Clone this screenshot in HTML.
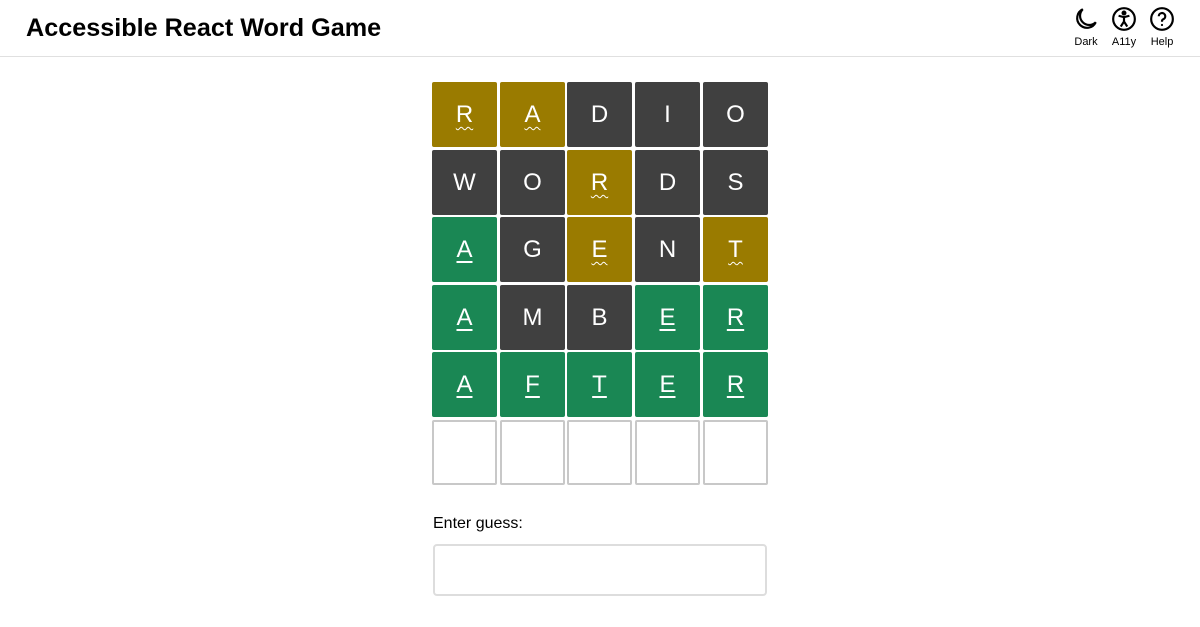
<!DOCTYPE html>
<html><head><style>
body{margin:0;width:1200px;height:627px;background:#fff;font-family:"Liberation Sans",sans-serif;position:relative;overflow:hidden}
h1{position:absolute;left:26px;top:14px;margin:0;font-size:25.2px;font-weight:bold;color:#000}
.hdr{position:absolute;left:0;top:56px;width:1200px;height:1px;background:#e0e0e0}
.ic{position:absolute;top:6px;width:40px;text-align:center;font-size:11px;color:#000}
.ic svg{display:block;margin:0 auto 4px}
.c{position:absolute;width:65px;height:65px;color:#fff;font-size:24px;text-align:center;line-height:66px;box-sizing:border-box;border-radius:2px}
.y{background:#9a7b00}.d{background:#404040}.g{background:#1a8754}
.e{border:2px solid #c8c8c8;background:#fff}
.u{text-decoration:underline;text-underline-offset:4px;text-decoration-thickness:1.5px}
.w{text-decoration:underline wavy;text-underline-offset:4px;text-decoration-thickness:1px}
label{position:absolute;left:433px;top:515px;font-size:16px;color:#000}
.inp{position:absolute;left:433px;top:544px;width:334px;height:52px;border:2px solid #ddd;border-radius:4px;box-sizing:border-box}
</style></head><body>
<h1>Accessible React Word Game</h1>
<div class="ic" style="left:1066px"><svg width="26" height="26" viewBox="0 0 24 24" fill="none" stroke="#000" stroke-width="2"><path d="M9 3a9 9 0 1 0 12 12A8 8 0 0 1 9 3z"/></svg>Dark</div>
<div class="ic" style="left:1104px"><svg width="26" height="26" viewBox="0 0 24 24" fill="none" stroke="#000" stroke-width="2"><circle cx="12" cy="12" r="10"/><circle cx="12" cy="6.5" r="1.3" fill="#000"/><path d="M7 9l5 1.3 5-1.3M12 10.3v4M9 19l3-4.7 3 4.7"/></svg>A11y</div>
<div class="ic" style="left:1142px"><svg width="26" height="26" viewBox="0 0 24 24" fill="none" stroke="#000" stroke-width="2"><circle cx="12" cy="12" r="10"/><path d="M9 9.5a3 3 0 1 1 4 2.8c-.7.3-1 1-1 1.7v.5"/><circle cx="12" cy="17.5" r="1" fill="#000" stroke="none"/></svg>Help</div>
<div class="hdr"></div>
<div id="g"></div>
<label>Enter guess:</label>
<div class="inp"></div>
<script>
var rows=[["yR","yA","dD","dI","dO"],["dW","dO","yR","dD","dS"],["gA","dG","yE","dN","yT"],["gA","dM","dB","gE","gR"],["gA","gF","gT","gE","gR"],["e","e","e","e","e"]];
var xs=[432,500,567,635,703],ys=[82,150,217,285,352,420],h="";
rows.forEach(function(r,i){r.forEach(function(c,j){var t=c[0],l=c.slice(1);var cls=t=="e"?"e":t;var inner=l?('<span class="'+(t=="y"?"w":t=="g"?"u":"")+'">'+l+'</span>'):"";
h+='<div class="c '+cls+'" style="left:'+xs[j]+'px;top:'+ys[i]+'px">'+inner+'</div>';});});
document.getElementById("g").innerHTML=h;
</script>
</body></html>
